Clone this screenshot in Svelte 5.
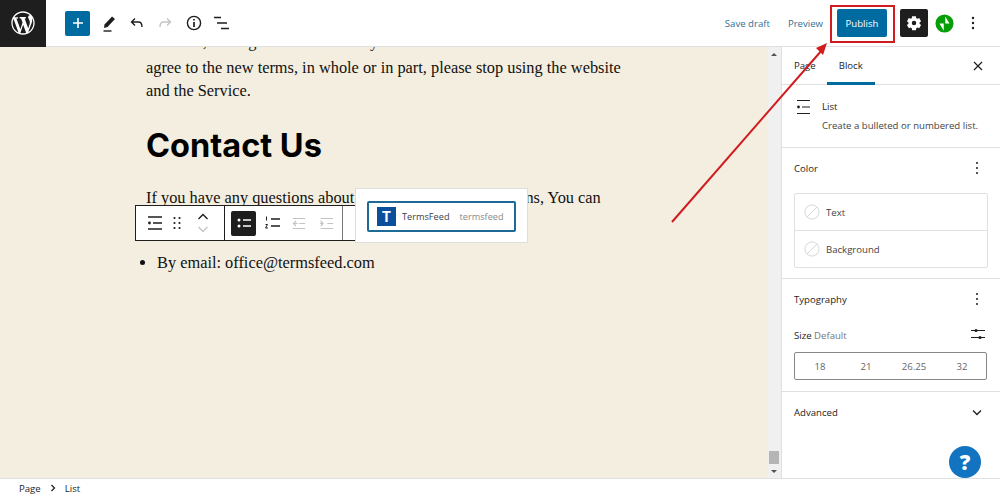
<script>
	const sizes = ['18', '21', '26.25', '32'];
</script>

<div class="editor">
	<header class="topbar">
		<div class="wp-logo">
			<svg width="28" height="28" viewBox="-2 -2 24 24" fill="#fff"><path d="M20 10c0-5.51-4.49-10-10-10C4.48 0 0 4.49 0 10c0 5.52 4.48 10 10 10 5.51 0 10-4.48 10-10zM7.78 15.37L4.37 6.22c.55-.02 1.17-.08 1.17-.08.5-.06.44-1.13-.06-1.11 0 0-1.45.11-2.37.11-.18 0-.37 0-.58-.01C4.12 2.69 6.87 1.11 10 1.11c2.33 0 4.45.87 6.05 2.34-.68-.11-1.65.39-1.65 1.58 0 .74.45 1.36.9 2.1.35.61.55 1.36.55 2.46 0 1.49-1.4 5-1.4 5l-3.03-8.37c.54-.02.82-.17.82-.17.5-.05.44-1.25-.06-1.22 0 0-1.44.12-2.38.12-.87 0-2.33-.12-2.33-.12-.5-.03-.56 1.2-.06 1.22l.92.08 1.26 3.41zM17.41 10c.24-.64.74-1.87.43-4.25.7 1.29 1.05 2.71 1.05 4.25 0 3.29-1.73 6.24-4.4 7.78.97-2.59 1.94-5.2 2.92-7.78zM6.1 18.09C3.12 16.65 1.11 13.53 1.11 10c0-1.3.23-2.48.72-3.59C3.25 10.3 4.67 14.2 6.1 18.09zm4.03-6.63l2.58 6.98c-.86.29-1.76.45-2.71.45-.79 0-1.57-.11-2.29-.33.81-2.38 1.62-4.74 2.42-7.1z"/></svg>
		</div>
		<div class="tools">
			<button class="add" aria-label="Add block">
				<svg width="16" height="16" viewBox="0 0 16 16"><path d="M8 3v10M3 8h10" stroke="#fff" stroke-width="1.6"/></svg>
			</button>
			<svg class="tool" width="20" height="20" viewBox="0 0 20 20"><path d="M5.500 11.500 13 3.500l3 2.500-7.500 8-3.500 1z" fill="#1e1e1e"/><path d="M4.500 18h8" stroke="#1e1e1e" stroke-width="1.4"/></svg>
			<svg class="tool" width="20" height="20" viewBox="0 0 20 20" fill="none" stroke="#1e1e1e" stroke-width="1.4"><path d="M8 5.500 4.500 9 8 12.500M4.500 9h7c2.500 0 3.500 1.500 3.500 5"/></svg>
			<svg class="tool" width="20" height="20" viewBox="0 0 20 20" fill="none" stroke="#c4c4c4" stroke-width="1.4"><path d="M12 5.500 15.500 9 12 12.500M15.500 9h-7C6 9 5 10.500 5 14"/></svg>
			<svg class="tool info" width="20" height="20" viewBox="0 0 20 20" fill="none" stroke="#1e1e1e" stroke-width="1.4"><circle cx="10" cy="10" r="6.6"/><path d="M10 9v5M10 6v1.6" stroke-width="1.7"/></svg>
			<svg class="tool" width="20" height="20" viewBox="0 0 20 20" stroke="#1e1e1e" stroke-width="1.5"><path d="M2 4.500h7M5 10h10M9 15.500h8"/></svg>
		</div>
		<div class="actions">
			<span class="link draft">Save draft</span>
			<span class="link">Preview</span>
			<button class="publish">Publish</button>
			<button class="settings" aria-label="Settings">
				<svg width="18" height="18" viewBox="0 0 24 24" fill="#fff"><path fill-rule="evenodd" d="M14.500 3h-5l-.5 2.600-1.500.8-2.400-1-2.500 4.300 2 1.700v1.700l-2 1.700 2.500 4.300 2.400-1 1.500.8.5 2.600h5l.5-2.600 1.500-.8 2.400 1 2.500-4.300-2-1.700v-1.700l2-1.700-2.500-4.300-2.400 1-1.500-.8zM12 9a3 3 0 1 1 0 6 3 3 0 0 1 0-6z"/></svg>
			</button>
			<svg class="jetpack" width="19" height="19" viewBox="0 0 20 20"><circle cx="10" cy="10" r="9.500" fill="#069e08"/><path d="M10.800 2.500v7.500h4.500zM9.200 17.500V10H4.700z" fill="#fff"/></svg>
			<svg class="kebab" width="4" height="14" viewBox="0 0 4 14" fill="#1e1e1e"><circle cx="2" cy="2" r="1.200"/><circle cx="2" cy="7" r="1.200"/><circle cx="2" cy="12" r="1.200"/></svg>
		</div>
	</header>

	<div class="middle">
		<main class="canvas">
			<div class="content">
				<p class="clipped">effective, You agree to be bound by the revised terms. If You do not</p>
				<p>agree to the new terms, in whole or in part, please stop using the website and the Service.</p>
				<h2>Contact Us</h2>
				<p class="ask">If you have any questions about these Terms and Conditions, You can</p>
				<ul>
					<li>By email: office@termsfeed.com</li>
				</ul>
			</div>

			<div class="block-toolbar">
				<div class="group first">
					<svg width="20" height="20" viewBox="0 0 20 20" stroke="#1e1e1e" stroke-width="1.400"><path d="M3 4h14M3 16h14M8 10h9"/><circle cx="4.500" cy="10" r="1.400" fill="#1e1e1e" stroke="none"/></svg>
					<svg width="10" height="14" viewBox="0 0 10 14" fill="#1e1e1e"><circle cx="2.500" cy="2" r="1.100"/><circle cx="7.500" cy="2" r="1.100"/><circle cx="2.500" cy="7" r="1.100"/><circle cx="7.500" cy="7" r="1.100"/><circle cx="2.500" cy="12" r="1.100"/><circle cx="7.500" cy="12" r="1.100"/></svg>
					<svg width="14" height="24" viewBox="0 0 14 24" fill="none" stroke-width="1.400"><path d="M2.500 8 7 3.500 11.500 8" stroke="#1e1e1e"/><path d="M2.500 16 7 20.500 11.500 16" stroke="#c4c4c4"/></svg>
				</div>
				<div class="group second">
					<span class="active">
						<svg width="18" height="18" viewBox="0 0 18 18" stroke="#fff" stroke-width="1.500"><path d="M8 6h8M8 12h8"/><circle cx="4" cy="6" r="1.500" fill="#fff" stroke="none"/><circle cx="4" cy="12" r="1.500" fill="#fff" stroke="none"/></svg>
					</span>
					<svg width="18" height="18" viewBox="0 0 18 18" stroke="#1e1e1e" stroke-width="1.500" fill="none"><path d="M8 5h9M8 12h9"/><path d="M3.500 2.500v4M2.500 10.500h2l-2 3.500h2.400" stroke-width="1"/></svg>
					<svg width="17" height="15" viewBox="0 0 20 18" stroke="#c4c4c4" stroke-width="1.400" fill="none"><path d="M3 3h15M11 9h7M3 15h15M7 6 4 9l3 3M4 9h5"/></svg>
					<svg width="17" height="15" viewBox="0 0 20 18" stroke="#c4c4c4" stroke-width="1.400" fill="none"><path d="M3 3h15M11 9h7M3 15h15M3 6l3 3-3 3M2 9h4"/></svg>
				</div>
				<div class="group third"></div>
			</div>

			<div class="popover">
				<div class="suggestion">
					<span class="t-logo">T</span>
					<span class="name">TermsFeed</span>
					<span class="slug">termsfeed</span>
				</div>
			</div>
		</main>

		<div class="scrollbar">
			<span class="arrow up"></span>
			<span class="thumb"></span>
			<span class="arrow down"></span>
		</div>

		<aside class="sidebar">
			<div class="tabs">
				<span class="tab">Page</span>
				<span class="tab current">Block</span>
				<svg class="close" width="12" height="12" viewBox="0 0 12 12" stroke="#1e1e1e" stroke-width="1.200"><path d="M2 2l8 8M10 2l-8 8"/></svg>
			</div>

			<section class="card">
				<svg width="20" height="20" viewBox="0 0 20 20" stroke="#1e1e1e" stroke-width="1.200"><path d="M3 3.500h13M3 16.500h13M8 10h8"/><circle cx="4.500" cy="10" r="1.400" fill="#1e1e1e" stroke="none"/></svg>
				<div>
					<div class="card-title">List</div>
					<div class="card-desc">Create a bulleted or numbered list.</div>
				</div>
			</section>

			<section class="panel color">
				<div class="panel-head">
					<span>Color</span>
					<svg width="4" height="14" viewBox="0 0 4 14" fill="#1e1e1e"><circle cx="2" cy="2" r="1"/><circle cx="2" cy="7" r="1"/><circle cx="2" cy="12" r="1"/></svg>
				</div>
				<div class="color-list">
					{#each ['Text', 'Background'] as label}
						<div class="color-row">
							<svg width="16" height="16" viewBox="0 0 17 17" fill="none" stroke="#d4d4d4"><circle cx="8.500" cy="8.500" r="7.500"/><path d="M3.500 13.500l10-10"/></svg>
							<span>{label}</span>
						</div>
					{/each}
				</div>
			</section>

			<section class="panel typo">
				<div class="panel-head">
					<span>Typography</span>
					<svg width="4" height="14" viewBox="0 0 4 14" fill="#1e1e1e"><circle cx="2" cy="2" r="1"/><circle cx="2" cy="7" r="1"/><circle cx="2" cy="12" r="1"/></svg>
				</div>
				<div class="size-head">
					<span>Size <em>Default</em></span>
					<svg width="14" height="14" viewBox="0 0 14 14" stroke="#1e1e1e"><path d="M0 3.500h14M0 10.500h14"/><circle cx="5" cy="3.500" r="1.600" fill="#1e1e1e" stroke="none"/><circle cx="9" cy="10.500" r="1.600" fill="#1e1e1e" stroke="none"/></svg>
				</div>
				<div class="sizes">
					{#each sizes as s}
						<span>{s}</span>
					{/each}
				</div>
			</section>

			<section class="panel advanced">
				<span>Advanced</span>
				<svg width="10" height="7" viewBox="0 0 10 7" fill="none" stroke="#1e1e1e" stroke-width="1.300"><path d="M1 1.500 5 5.500l4-4"/></svg>
			</section>

			<button class="help" aria-label="Help">?</button>
		</aside>
	</div>

	<footer class="crumbs">
		<span>Page</span>
		<svg width="6" height="8" viewBox="0 0 6 8" fill="none" stroke="#1e1e1e" stroke-width="1.200"><path d="M1.500 1 4.500 4l-3 3"/></svg>
		<span>List</span>
	</footer>

	<!-- red annotation drawn over the screenshot -->
	<div class="mark"></div>
	<svg class="pointer" width="1000" height="497" viewBox="0 0 1000 497">
		<path d="M672 222 822 50" stroke="#d01c1f" stroke-width="2" fill="none"/>
		<path d="M827 43 816 48 823 55z" fill="#d01c1f"/>
	</svg>
</div>

<style>
	:global(body) {
		margin: 0;
	}

	.editor {
		position: relative;
		display: grid;
		grid-template-rows: 47px 1fr 19px;
		width: 1000px;
		height: 497px;
		overflow: hidden;
		background: #fff;
		color: #1e1e1e;
		font-family: "Open Sans", "Noto Sans", sans-serif;
		font-size: 9.6px;
	}

	.topbar {
		display: flex;
		align-items: center;
		border-bottom: 1px solid #e0e0e0;
		box-sizing: border-box;
	}

	.wp-logo {
		display: flex;
		align-items: center;
		justify-content: center;
		width: 46px;
		height: 47px;
		background: #1e1e1e;
	}

	.tools {
		display: flex;
		align-items: center;
		gap: 8px;
		margin-left: 19px;
	}

	.add {
		display: flex;
		align-items: center;
		justify-content: center;
		width: 25px;
		height: 25px;
		margin-right: 1px;
		padding: 0;
		background: #006ba1;
		border: 0;
		border-radius: 2px;
	}

	.info {
		margin-left: 1px;
	}

	.actions {
		display: flex;
		align-items: center;
		margin-left: auto;
	}

	.link {
		margin-right: 14px;
		color: #2f6f97;
	}

	.link.draft {
		margin-right: 18px;
	}

	.publish {
		width: 50px;
		height: 28px;
		padding: 0;
		background: #006ba1;
		border: 0;
		border-radius: 2px;
		color: #fff;
		font: inherit;
	}

	.settings {
		display: flex;
		align-items: center;
		justify-content: center;
		width: 28px;
		height: 28px;
		margin-left: 13px;
		padding: 0;
		background: #1e1e1e;
		border: 0;
		border-radius: 2px;
	}

	.jetpack {
		margin-left: 7px;
	}

	.kebab {
		margin: 0 25px 0 17px;
	}

	.middle {
		display: grid;
		grid-template-columns: 768px 13px 219px;
		min-height: 0;
	}

	.canvas {
		position: relative;
		overflow: hidden;
		background: #f4eee0;
	}

	.content {
		width: 476px;
		margin-top: -17px;
		margin-left: 146px;
		font-family: "Liberation Serif", serif;
		font-size: 16.35px;
		line-height: 23px;
		color: #111;
	}

	.content p {
		margin: 0;
	}

	.content .clipped {
		margin-bottom: 3px;
		white-space: nowrap;
	}

	.content h2 {
		margin: 22px 0 0;
		font-family: Inter, sans-serif;
		font-size: 32.5px;
		line-height: 43px;
		font-weight: 700;
		color: #000;
	}

	.content .ask {
		margin-top: 19px;
		white-space: nowrap;
	}

	.content ul {
		margin: 42px 0 0;
		padding-left: 11px;
	}

	.block-toolbar {
		position: absolute;
		top: 158px;
		left: 135px;
		display: flex;
		height: 36px;
		background: #fff;
		border: 1px solid #1e1e1e;
		box-sizing: border-box;
	}

	.group {
		display: flex;
		align-items: center;
		box-sizing: border-box;
		border-right: 1px solid #1e1e1e;
	}

	.first {
		width: 89px;
		padding: 0 14px 0 9px;
		gap: 7px;
	}

	.first svg:last-child {
		margin-left: 7px;
	}

	.second {
		width: 118px;
		gap: 7px;
		padding-left: 6px;
		border-right-color: #777;
	}

	.second > svg:nth-of-type(2) {
		margin-left: 2px;
	}

	.second > svg:nth-of-type(3) {
		margin-left: 4px;
	}

	.third {
		width: 30px;
		border-right: 0;
	}

	.active {
		display: flex;
		align-items: center;
		justify-content: center;
		width: 25px;
		height: 25px;
		background: #1e1e1e;
		border-radius: 2px;
	}

	.popover {
		position: absolute;
		top: 141px;
		left: 355px;
		box-sizing: border-box;
		width: 173px;
		height: 55px;
		padding: 12px 11px;
		background: #fff;
		border: 1px solid #ddd;
	}

	.suggestion {
		display: flex;
		align-items: center;
		box-sizing: border-box;
		width: 149px;
		height: 31px;
		padding-left: 8px;
		border: 2px solid #1d6a96;
		border-radius: 2px;
		font-size: 9.2px;
	}

	.t-logo {
		display: flex;
		align-items: center;
		justify-content: center;
		width: 19px;
		height: 19px;
		background: #0b4f9c;
		color: #fff;
		font-family: Inter, sans-serif;
		font-size: 14px;
		font-weight: 700;
	}

	.name {
		margin-left: 6px;
		color: #3c3c48;
	}

	.slug {
		margin-left: 10px;
		color: #8a8a8a;
	}

	.scrollbar {
		position: relative;
		background: #f0f0f0;
	}

	.arrow {
		position: absolute;
		left: 3px;
		border-left: 3px solid transparent;
		border-right: 3px solid transparent;
	}

	.arrow.up {
		top: 6px;
		border-bottom: 3px solid #505050;
	}

	.arrow.down {
		bottom: 5px;
		border-top: 3px solid #505050;
	}

	.thumb {
		position: absolute;
		left: 1px;
		bottom: 14px;
		width: 10px;
		height: 13px;
		background: #b5b5b5;
	}

	.sidebar {
		position: relative;
		border-left: 1px solid #e0e0e0;
		background: #fff;
	}

	.tabs {
		display: flex;
		align-items: stretch;
		height: 38px;
		padding-left: 12px;
		border-bottom: 1px solid #e0e0e0;
		box-sizing: border-box;
		position: relative;
	}

	.tab {
		line-height: 38px;
		margin-right: 24px;
		box-sizing: border-box;
	}

	.tab.current {
		width: 48px;
		margin-left: -13px;
		margin-right: 0;
		text-align: center;
		border-bottom: 3px solid #006ba1;
		height: 38px;
	}

	.close {
		position: absolute;
		top: 13px;
		right: 16px;
	}

	.card {
		display: flex;
		gap: 8px;
		height: 63px;
		box-sizing: border-box;
		padding: 15px 12px 0;
		border-bottom: 1px solid #e0e0e0;
	}

	.card svg {
		margin-top: -3px;
	}

	.card-title {
		line-height: 14px;
		margin-bottom: 5px;
	}

	.card-desc {
		color: #444;
		white-space: nowrap;
	}

	.panel {
		box-sizing: border-box;
		padding: 0 12px;
		border-bottom: 1px solid #e0e0e0;
	}

	.panel-head {
		display: flex;
		align-items: center;
		justify-content: space-between;
		height: 18px;
		padding-right: 9px;
	}

	.color {
		height: 131px;
		padding-top: 11px;
	}

	.color-list {
		margin-top: 16px;
		border: 1px solid #e0e0e0;
		border-radius: 2px;
	}

	.color-row {
		display: flex;
		align-items: center;
		gap: 6px;
		height: 36px;
		padding-left: 9px;
		color: #444;
	}

	.color-row + .color-row {
		border-top: 1px solid #e0e0e0;
	}

	.typo {
		height: 113px;
		padding-top: 11px;
	}

	.size-head {
		display: flex;
		align-items: center;
		justify-content: space-between;
		margin-top: 20px;
		padding-right: 3px;
		height: 14px;
	}

	.size-head svg {
		margin-top: -2px;
	}

	.size-head em {
		font-style: normal;
		color: #757575;
	}

	.sizes {
		display: grid;
		grid-template-columns: 46px 46px 50px 46px;
		justify-content: start;
		align-items: center;
		box-sizing: border-box;
		height: 28px;
		margin-top: 10px;
		padding-left: 2px;
		border: 1px solid #888;
		border-radius: 2px;
		color: #666;
		text-align: center;
		width: 193px;
	}

	.advanced {
		display: flex;
		align-items: center;
		justify-content: space-between;
		height: 40px;
		padding-right: 18px;
		border-bottom: 0;
	}

	.help {
		position: absolute;
		right: 19px;
		bottom: 0;
		width: 32px;
		height: 32px;
		padding: 0;
		border: 0;
		border-radius: 50%;
		background: #1273c0;
		color: #fff;
		font-family: "Open Sans", sans-serif;
		font-size: 21px;
		font-weight: 800;
		line-height: 32px;
	}

	.crumbs {
		display: flex;
		align-items: center;
		gap: 9px;
		padding-left: 19px;
		border-top: 1px solid #e0e0e0;
		box-sizing: border-box;
	}

	.mark {
		position: absolute;
		top: 5px;
		left: 830px;
		width: 65px;
		height: 38px;
		box-sizing: border-box;
		border: 2px solid #d01c1f;
	}

	.pointer {
		position: absolute;
		top: 0;
		left: 0;
		pointer-events: none;
	}
</style>
